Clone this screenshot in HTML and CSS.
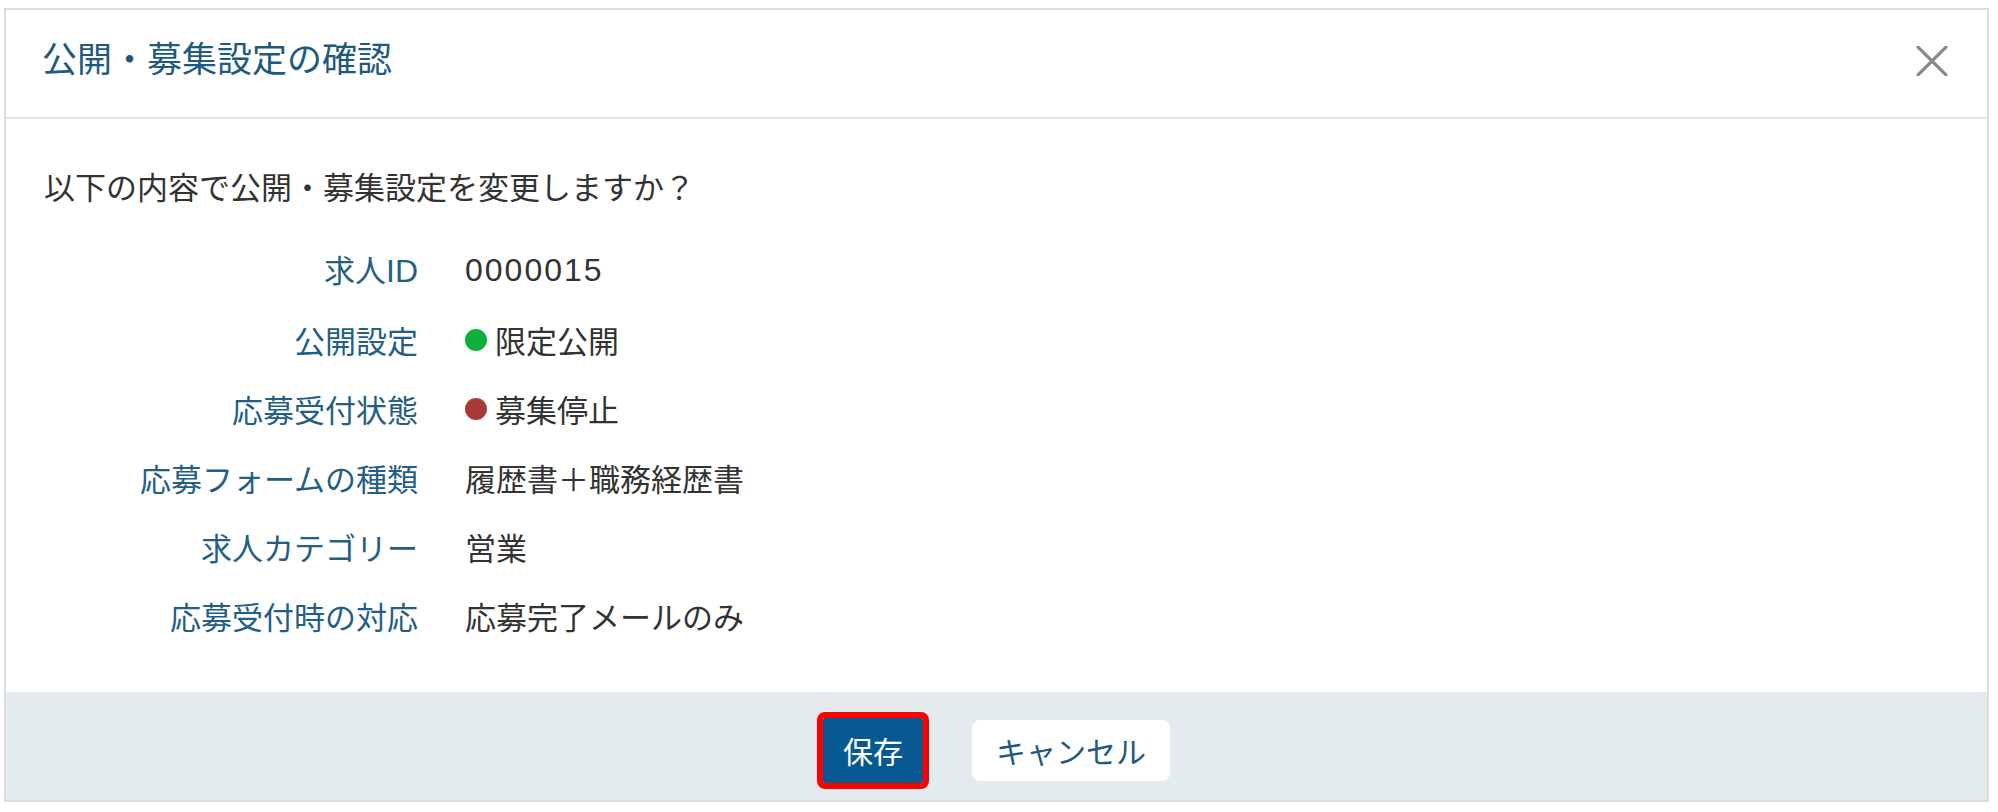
FILE: index.html
```html
<!DOCTYPE html>
<html lang="ja">
<head>
<meta charset="utf-8">
<title>公開・募集設定の確認</title>
<link rel="stylesheet" href="styles.css">
</head>
<body>
<div class="modal">
  <div class="modal-header">
    <h1 class="modal-title">公開・募集設定の確認</h1>
    <button class="close-btn" aria-label="閉じる">
      <svg width="32" height="30" viewBox="0 0 32 30"><path d="M2 1 L30 29 M30 1 L2 29" stroke="#8a8a8a" stroke-width="3.2" stroke-linecap="round" fill="none"/></svg>
    </button>
  </div>
  <div class="modal-body">
    <p class="question">以下の内容で公開・募集設定を変更しますか？</p>
    <dl class="details">
      <dt>求人<span class="latin">ID</span></dt><dd class="num">0000015</dd>
      <dt>公開設定</dt><dd><span class="dot dot-green"></span>限定公開</dd>
      <dt>応募受付状態</dt><dd><span class="dot dot-red"></span>募集停止</dd>
      <dt>応募フォームの種類</dt><dd>履歴書＋職務経歴書</dd>
      <dt>求人カテゴリー</dt><dd>営業</dd>
      <dt>応募受付時の対応</dt><dd>応募完了メールのみ</dd>
    </dl>
  </div>
  <div class="modal-footer">
    <button class="btn btn-save">保存</button>
    <button class="btn btn-cancel">キャンセル</button>
  </div>
</div>
</body>
</html>
```

FILE: styles.css
```css
* { box-sizing: border-box; }
html, body { margin: 0; padding: 0; background: #fff; }
body {
  font-family: "Noto Sans CJK JP", "Noto Sans", sans-serif;
  color: #333;
}
.modal {
  margin: 8px 0 0 4px;
  width: 1985px;
  height: 794px;
  border: 2px solid #dcdcdc;
  display: flex;
  flex-direction: column;
  background: #fff;
}
.modal-header {
  height: 109px;
  border-bottom: 2px solid #e6e6e6;
  display: flex;
  align-items: center;
  justify-content: space-between;
  padding: 0 39px 13px 36px;
}
.modal-title {
  margin: 0;
  font-size: 35px;
  line-height: 50px;
  font-weight: 400;
  color: #1e5a80;
}
.close-btn {
  background: none;
  border: 0;
  padding: 0;
  margin-top: 8px;
  width: 32px;
  height: 30px;
  display: flex;
  cursor: pointer;
}
.modal-body {
  flex: 1;
  padding: 44px 38px 0 38px;
}
.question {
  margin: 0 0 37px;
  font-size: 31px;
  line-height: 46px;
  color: #333;
}
.details {
  margin: 0;
  display: grid;
  grid-template-columns: 374px 1fr;
  column-gap: 47px;
  row-gap: 23px;
  font-size: 31px;
  line-height: 46px;
}
.details dt {
  text-align: right;
  color: #235e84;
}
.details dd {
  margin: 0;
  color: #333;
  display: flex;
  align-items: center;
}
.latin { font-family: "Liberation Sans", sans-serif; font-size: 32px; }
.details dd.num {
  font-family: "Liberation Sans", sans-serif;
  font-size: 32px;
  letter-spacing: 2px;
}
.dot {
  width: 22px;
  height: 22px;
  border-radius: 50%;
  margin-right: 8px;
  flex: none;
}
.dot-green { background: #0fb03a; }
.dot-red { background: #a83b3a; }
.modal-footer {
  height: 108px;
  background: #e3ebee;
  display: flex;
  justify-content: center;
  align-items: center;
  gap: 49px;
  padding-top: 8px;
}
.btn {
  font-family: inherit;
  font-size: 30px;
  border: 0;
  cursor: pointer;
  display: flex;
  align-items: center;
  justify-content: center;
}
.btn-save {
  height: 65px;
  padding: 0 20px;
  background: #065a91;
  color: #fff;
  border-radius: 2px;
  outline: 6px solid #ff0000;
}
.btn-cancel {
  height: 61px;
  padding: 0 24px;
  background: #fff;
  color: #1e5a80;
  border-radius: 8px;
}
```
